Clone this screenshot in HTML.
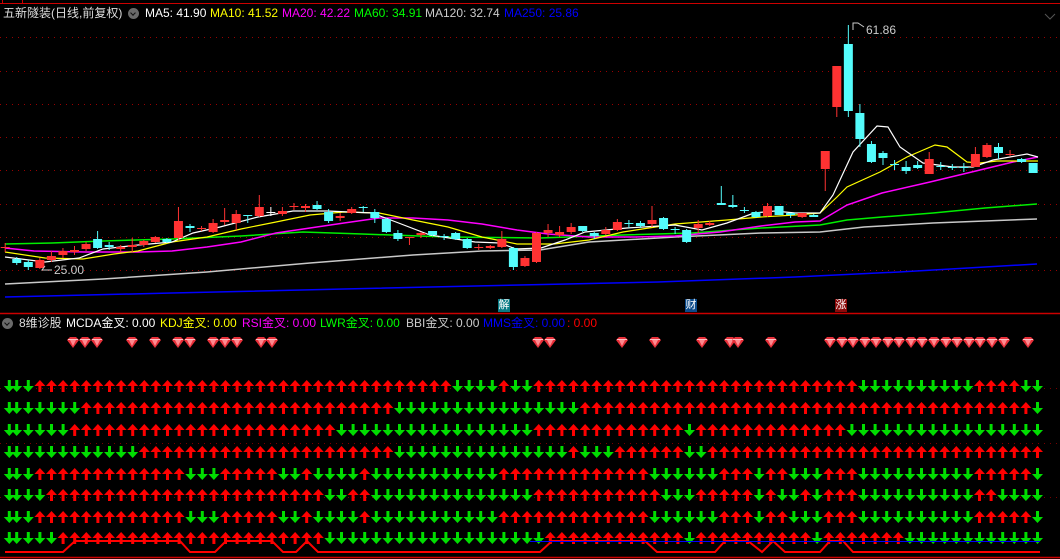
<!DOCTYPE html>
<html><head><meta charset="utf-8"><style>
html,body{margin:0;padding:0;background:#000;width:1060px;height:559px;overflow:hidden;position:relative;font-family:"Liberation Sans","Noto Sans CJK SC",sans-serif;font-size:12px}
.t{position:absolute;white-space:nowrap;line-height:14px}
svg{position:absolute;left:0;top:0}
.ic{position:absolute;width:11px;height:11px;border-radius:50%;background:#6a6a6a}
.ic:after{content:"";position:absolute;left:3px;top:3px;width:3px;height:3px;border-right:1.5px solid #111;border-bottom:1.5px solid #111;transform:rotate(45deg)}
.tag{position:absolute;width:12px;height:13px;font-size:11px;line-height:13px;text-align:center;color:#fff}
</style></head><body>
<svg id="s" width="1060" height="559" xmlns="http://www.w3.org/2000/svg"></svg>

<div class="t" style="left:3px;top:6px;color:#ddd">五新隧装(日线,前复权)</div>
<div class="ic" style="left:128px;top:8px"></div>
<div class="t" style="left:145px;top:6px;color:#fff">MA5: 41.90</div>
<div class="t" style="left:210px;top:6px;color:#ff0">MA10: 41.52</div>
<div class="t" style="left:282px;top:6px;color:#f0f">MA20: 42.22</div>
<div class="t" style="left:354px;top:6px;color:#0f0">MA60: 34.91</div>
<div class="t" style="left:425px;top:6px;color:#ccc">MA120: 32.74</div>
<div class="t" style="left:504px;top:6px;color:#00f">MA250: 25.86</div>
<div class="t" style="left:866px;top:23px;color:#ccc">61.86</div>
<div class="t" style="left:54px;top:263px;color:#ccc">25.00</div>

<div class="tag" style="left:498px;top:299px;background:#087c86">解</div>
<div class="tag" style="left:685px;top:299px;background:#0b4a8a">财</div>
<div class="tag" style="left:835px;top:299px;background:#8a0a0a">涨</div>

<div class="ic" style="left:2px;top:318px"></div>
<div class="t" style="left:19px;top:316px;color:#ddd">8维诊股</div>
<div class="t" style="left:66px;top:316px;color:#fff">MCDA金叉: 0.00</div>
<div class="t" style="left:160px;top:316px;color:#ff0">KDJ金叉: 0.00</div>
<div class="t" style="left:242px;top:316px;color:#f0f">RSI金叉: 0.00</div>
<div class="t" style="left:320px;top:316px;color:#0f0">LWR金叉: 0.00</div>
<div class="t" style="left:406px;top:316px;color:#ccc">BBI金叉: 0.00</div>
<div class="t" style="left:483px;top:316px;color:#00f">MMS金叉: 0.00</div>
<div class="t" style="left:567px;top:316px;color:#f00">: 0.00</div>

<script>
var s=document.getElementById('s'),h='';
function L(x1,y1,x2,y2,c,w,d){h+='<line x1="'+x1+'" y1="'+y1+'" x2="'+x2+'" y2="'+y2+'" stroke="'+c+'" stroke-width="'+(w||1)+'"'+(d?' stroke-dasharray="'+d+'"':'')+'/>';}
function R(x,y,w,hh,c){h+='<rect x="'+x+'" y="'+y+'" width="'+w+'" height="'+hh+'" fill="'+c+'"/>';}
function P(pts,c,w){h+='<polyline points="'+pts+'" fill="none" stroke="'+c+'" stroke-width="'+(w||1)+'"/>';}
// frame
L(0,3.5,1060,3.5,'#c00',1);L(2.5,0,2.5,4,'#c00');L(22.5,0,22.5,4,'#c00');
L(0,313.5,1060,313.5,'#c00',1.5);L(0,557.5,1060,557.5,'#c00',1.5);
h+='<polyline points="1045,14 1050,19 1055,14" fill="none" stroke="#555"/>';
// grid
[37,71,104,137,170,204,237,270].forEach(function(y){L(0,y+.5,1060,y+.5,'#900',1,'1 5');});
[388,443,497].forEach(function(y){L(0,y+.5,1060,y+.5,'#700',1,'1 5');});
// MAs
P('5,297 172,293 344,289 520,285 658,282 795,277 899,272 968,268 1037,264','#0000ff',1.5);
P('5,284 103,279 207,272 310,263 413,255 482,251 540,250 589,242 675,237 761,233 820,232 864,227 933,223 1037,219','#c8c8c8',1.5);
P('5,244 52,243 103,241 172,239 241,236 303,232 362,234 448,237 540,238 623,235 692,233 761,228 820,225 847,220 882,217 933,213 985,208 1037,204','#00ee00',1.5);
P('5,248 34,251 86,252 138,252 172,251 207,247 241,242 276,233 310,228 344,223 379,218 413,218 448,220 482,224 517,230 548,234 589,237 634,237 675,236 720,232 761,226 795,222 820,221 847,205 882,193 930,182 980,170 1013,162 1038,157','#ff00ff',1.5);
P('5,252 45,258 83,259 114,254 138,251 172,242 207,237 241,229 276,222 310,215 344,212 379,213 413,220 448,227 482,237 517,244 554,244 589,240 623,232 675,224 727,220 761,217 795,215 820,213 837,197 847,187 880,172 907,157 935,145 947,147 967,162 980,163 997,161 1038,161','#ffff00',1.2);
P('5,257 45,262 79,258 103,249 138,245 172,242 193,233 220,227 258,217 293,211 327,211 372,213 396,222 430,235 475,242 500,243 516,249 541,248 565,240 585,232 627,228 675,225 702,230 727,223 754,213 775,211 795,213 820,213 833,195 853,152 877,126 888,127 900,147 923,163 953,167 973,167 993,160 1027,154 1038,157','#fff',1.2);
// candles [n, top, bottom, hi, lo, color r/c]
var C=[[0,247,248,243,252,'r'],[1,259,263,257,265,'c'],[2,262,267,260,270,'c'],[3,260,268,258,269,'r'],[4,256,260,251,262,'r'],[5,251,255,248,258,'r'],[6,250,252,246,255,'r'],[7,244,249,242,251,'r'],[8,239,248,231,249,'c'],[9,245,247,242,250,'c'],[10,247,249,245,252,'r'],[11,245,247,238,252,'r'],[12,241,245,240,247,'r'],[13,237,242,236,243,'r'],[14,239,242,238,243,'c'],[15,221,238,207,240,'r'],[16,226,228,224,232,'c'],[17,228,229,226,231,'r'],[18,223,232,219,233,'r'],[19,220,222,208,225,'r'],[20,214,223,210,230,'r'],[21,215,216,215,223,'c'],[22,207,216,195,217,'r'],[23,212,213,207,216,'w'],[24,211,214,207,216,'r'],[25,206,207,203,210,'r'],[26,206,208,204,212,'r'],[27,205,209,201,210,'c'],[28,212,221,209,223,'c'],[29,216,218,213,221,'r'],[30,209,213,207,214,'r'],[31,207,208,206,212,'c'],[32,212,218,209,223,'c'],[33,219,232,218,233,'c'],[34,233,239,230,241,'c'],[35,237,238,237,245,'r'],[36,233,235,232,238,'r'],[37,231,235,231,236,'c'],[38,236,237,234,240,'c'],[39,233,239,232,240,'c'],[40,239,248,238,249,'c'],[41,247,248,244,250,'r'],[42,246,248,245,249,'r'],[43,239,247,231,248,'r'],[44,248,267,247,270,'c'],[45,258,266,256,267,'r'],[46,233,262,232,263,'r'],[47,230,233,224,237,'r'],[48,232,235,226,237,'r'],[49,227,232,223,234,'r'],[50,226,231,226,232,'c'],[51,233,236,232,239,'c'],[52,230,234,227,235,'r'],[53,222,230,219,231,'r'],[54,223,224,220,228,'c'],[55,223,226,221,228,'c'],[56,220,224,206,227,'r'],[57,218,229,217,230,'c'],[58,229,230,227,234,'c'],[59,230,242,229,243,'c'],[60,224,228,220,233,'r'],[61,223,225,221,226,'r'],[62,203,205,186,205,'c'],[63,205,207,195,208,'c'],[64,210,211,207,213,'c'],[65,212,217,211,218,'c'],[66,206,216,203,217,'r'],[67,206,215,206,215,'c'],[68,213,215,213,218,'c'],[69,213,217,213,218,'r'],[70,215,217,214,217,'c'],[71,151,169,151,191,'r'],[72,66,107,66,117,'r'],[73,44,111,25,117,'c'],[74,113,139,104,147,'c'],[75,144,162,141,163,'c'],[76,153,158,151,165,'c'],[77,164,165,160,170,'c'],[78,167,171,161,174,'c'],[79,165,168,161,169,'c'],[80,159,174,152,174,'r'],[81,166,167,162,170,'c'],[82,167,168,164,170,'c'],[83,167,168,163,172,'c'],[84,154,167,147,167,'r'],[85,145,157,143,158,'r'],[86,147,153,143,159,'c'],[87,154,155,150,156,'r'],[88,159,162,158,163,'c'],[89,163,173,163,173,'c']];
C.forEach(function(c){var x=5.2+11.55*c[0],col=c[5]=='r'?'#ff3232':(c[5]=='w'?'#ffffff':'#54fcfc');
 L(x,c[3],x,c[4],col,1);var hh=Math.max(1,c[2]-c[1]);R(x-4.5,c[1],9,hh,col);});
// flag & arrow labels
P('853,30 853,23 858,23 861,25 864,27','#ccc',1);
P('45,266 42,270 52,270','#ccc',1);
// diamonds
[73,85,97,132,155,178,190,213,225,237,261,272,538,550,622,655,702,730,738,771,830,842,853,865,876,888,899,911,922,934,946,957,969,980,992,1004,1028].forEach(function(x){
 h+='<polygon points="'+(x-6)+',340 '+(x-3)+',337 '+(x+3)+',337 '+(x+6)+',340 '+x+',348" fill="#e8303a"/>';
 h+='<polygon points="'+(x-3)+',340 '+(x+3)+',340 '+x+',346" fill="#ff8a90"/>';
 L(x-5,339.5,x+5,339.5,'#ffc0c4',1);});
// arrows
var rows=['d3u36d4u1d2u28d10u4d2','d7u27d16u39d1','d6u23d17u13d1u13d17','d12u22d15u1d3u6d2u29','d3u13d3u5d2u1d4u1d11u13d6u3d1u2d3u3d10u5d1','d4u24d2u2d14u11d3u5d1u1d2u1d1u3d10u2d4','d3u13d3u5d2u1d4u1d11u13d6u3d1u2d3u3d10u5d1','d5u23d19u12d1u10d1u7d12'];
var ty=[380,402,424,446,468,489,511,532];
rows.forEach(function(r,ri){var seq='';r.replace(/([ud])(\d+)/g,function(m,a,n){for(var k=0;k<+n;k++)seq+=a;});
 for(var i=0;i<seq.length;i++){var x=i==0?9.3:(i==1?16.7:28.3+11.6*(i-2)),y=ty[ri];
  if(seq[i]=='u'){h+='<polygon points="'+(x-5.5)+','+(y+6)+' '+x+','+y+' '+(x+5.5)+','+(y+6)+'" fill="#ff0000"/>';R(x-1.5,y+6,3,6,'#ff0000');}
  else{R(x-1.5,y,3,6,'#00dd00');h+='<polygon points="'+(x-5.5)+','+(y+6)+' '+(x+5.5)+','+(y+6)+' '+x+','+(y+12)+'" fill="#00dd00"/>';}}});
// bottom step line
P('5,552 63,552 75,541 180,541 190,552 215,552 226,541 272,541 283,552 296,552 307,541 318,552 540,552 552,541 645,541 657,552 715,552 725,541 748,541 762,552 773,541 785,552 820,552 830,541 843,541 853,552 1040,552','#ff0000',2);
L(530,541.5,1040,541.5,'#0000ff',1);
s.innerHTML=h;
</script>
</body></html>
